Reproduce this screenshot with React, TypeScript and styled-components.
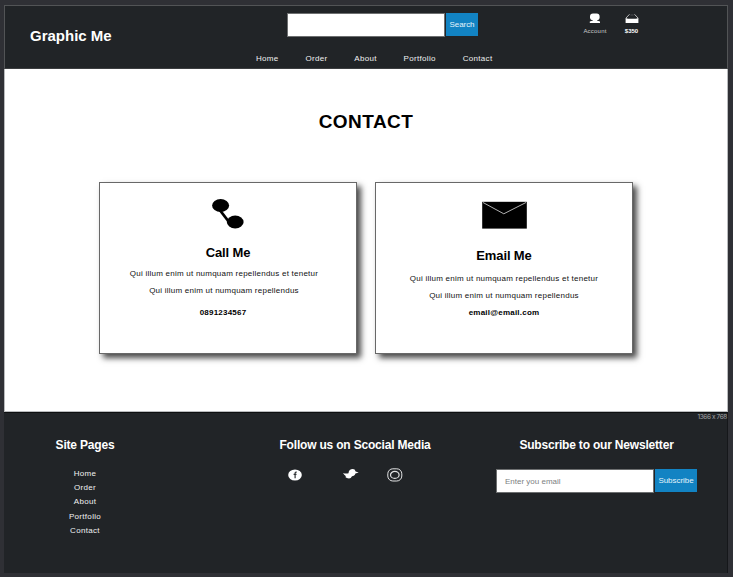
import React from "react";
import styled, { createGlobalStyle } from "styled-components";

const GlobalStyle = createGlobalStyle`
  * { box-sizing: border-box; }
  body {
    margin: 0;
    background: #2f3035;
    font-family: "Liberation Sans", Arial, sans-serif;
  }
  h1, h2, h3, p, ul { margin: 0; padding: 0; }
`;

const Canvas = styled.div`
  width: 733px;
  height: 577px;
  padding: 5px 5px 4px 4px;
  overflow: hidden;
`;

const Header = styled.header`
  display: flex;
  height: 64px;
  border: 1px solid #525456;
  border-bottom-color: #3c3e40;
  background: #212427;
  color: #fff;
`;

const Logo = styled.h1`
  width: 251px;
  padding: 20px 0 0 25px;
  font-size: 15px;
  line-height: 20px;
  white-space: nowrap;
`;

const HeaderCenter = styled.div`
  width: 326px;
  padding-top: 7px;
`;

const Form = styled.form<{ $indent?: number }>`
  display: flex;
  gap: 1px;
  margin-left: ${(p) => p.$indent ?? 0}px;
`;

const Field = styled.input`
  width: 158px;
  height: 24px;
  padding: 0 8px;
  border: 1px solid #6d6f70;
  border-radius: 0;
  outline: 0;
  background: #fff;
  font-family: inherit;
  font-size: 8px;
  letter-spacing: 0;
  &::placeholder { color: #7d7f82; opacity: 1; }
`;

const Button = styled.button<{ $width: number }>`
  width: ${(p) => p.$width}px;
  height: 23px;
  padding: 0;
  border: 0;
  background: #1283c3;
  color: #e4f3fb;
  font-family: inherit;
  font-size: 8px;
  line-height: 24px;
  letter-spacing: -0.05px;
  white-space: nowrap;
`;

const Nav = styled.nav`
  display: flex;
  gap: 26.8px;
  margin-top: 15px;
`;

const NavLink = styled.a`
  color: #f0f1f1;
  font-size: 8px;
  line-height: 14px;
  letter-spacing: 0.32px;
`;

const Shortcut = styled.div<{ $width: number; $bold?: boolean }>`
  display: flex;
  flex-direction: column;
  align-items: center;
  width: ${(p) => p.$width}px;
  padding-top: 7px;
  color: ${(p) => (p.$bold ? "#fff" : "#c9cbcc")};
  font-size: 6px;
  font-weight: ${(p) => (p.$bold ? 700 : 400)};
  line-height: 8px;
  letter-spacing: ${(p) => (p.$bold ? 0 : 0.22)}px;
  svg { display: block; margin-bottom: 3px; }
`;

const Main = styled.main`
  height: 343px;
  padding-top: 41px;
  border: solid #b9bbbd;
  border-width: 0 1px 1px;
  background: #fff;
  color: #000;
`;

const PageTitle = styled.h2`
  font-size: 19px;
  line-height: 24px;
  letter-spacing: 0.45px;
  text-align: center;
`;

const Cards = styled.div`
  display: flex;
  gap: 18px;
  margin: 48px 0 0 94px;
`;

const Card = styled.section`
  display: flex;
  flex-direction: column;
  align-items: center;
  width: 258px;
  height: 172px;
  border: 1px solid #686868;
  background: #fff;
  box-shadow: 4px 4px 6px rgba(0, 0, 0, 0.72);
`;

const CardIcon = styled.div<{ $height: number }>`
  display: flex;
  justify-content: center;
  align-items: center;
  width: 100%;
  height: ${(p) => p.$height}px;
`;

const CardTitle = styled.h3`
  font-size: 13px;
  line-height: 18px;
  letter-spacing: -0.13px;
  white-space: nowrap;
`;

const CardText = styled.p<{ $top: number; $inset?: number }>`
  padding: ${(p) => p.$top}px ${(p) => p.$inset ?? 0}px 0 0;
  color: #111;
  font-size: 8px;
  line-height: 17px;
  letter-spacing: 0.235px;
  text-align: center;
  white-space: nowrap;
`;

const CardValue = styled.strong<{ $top: number; $inset?: number }>`
  padding: ${(p) => p.$top}px ${(p) => p.$inset ?? 0}px 0 0;
  font-size: 8px;
  line-height: 12px;
  letter-spacing: 0.22px;
`;

const Footer = styled.footer`
  display: flex;
  height: 161px;
  border-top: 1px solid #0d0f10;
  border-right: 1px solid #15171a;
  background: #212427;
  color: #fff;
`;

const FooterColumn = styled.section<{ $width: number; $after?: number }>`
  flex: none;
  width: ${(p) => p.$width}px;
  margin-right: ${(p) => p.$after ?? 0}px;
  padding-top: 24px;
`;

const FooterTitle = styled.h3`
  font-size: 12px;
  line-height: 16px;
  letter-spacing: -0.19px;
  text-align: center;
  white-space: nowrap;
`;

const LinkList = styled.ul`
  display: flex;
  flex-direction: column;
  align-items: center;
  margin-top: 14px;
  list-style: none;
`;

const LinkItem = styled.li`
  height: 14.2px;
  line-height: 14px;
  font-size: 0;
`;

const Newsletter = styled.div`
  margin-top: 16px;
`;

const SocialRow = styled.div`
  display: flex;
  align-items: center;
  height: 14px;
  margin: 15px 0 0 74px;
  svg { display: block; }
  svg:nth-child(2) { margin: -3px 28px 0 41px; }
`;

const SizeTag = styled.span`
  width: 31px;
  color: #a4a6a8;
  font-family: Inter, sans-serif;
  font-size: 6.5px;
  line-height: 8px;
  letter-spacing: -0.4px;
  text-align: right;
  white-space: nowrap;
`;

const pages = ["Home", "Order", "About", "Portfolio", "Contact"];

const UserIcon = () => (
  <svg width="12" height="11" viewBox="0 0 12 11" fill="#fff">
    <rect x="1" y=".4" width="9.600" height="6.800" rx="3" />
    <path d="M4 6.500h4v1l3 1v1.500H.8V8.500L4 7.500z" />
  </svg>
);

const BasketIcon = () => (
  <svg width="14" height="11" viewBox="0 0 14 11">
    <path d="M1 5L4.500 1.300M13 5L9.500 1.300" stroke="#c8caca" strokeWidth=".9" />
    <path d="M5.500 2h3" stroke="#55585a" strokeWidth=".8" />
    <path d="M.6 4.900L3 5.800h8l2.400-.9v5.200H.6z" fill="#fff" />
  </svg>
);

const PhoneIcon = () => (
  <svg width="34" height="32" viewBox="0 0 34 32">
    <path d="M8 11L18 24" stroke="#000" strokeWidth="2.800" />
    <ellipse cx="9.600" cy="7.500" rx="8.500" ry="6.500" />
    <ellipse cx="24.200" cy="24" rx="8.400" ry="6.500" />
  </svg>
);

const MailIcon = () => (
  <svg width="45" height="28" viewBox="0 0 45 28">
    <rect x=".2" y=".8" width="44.600" height="26.800" />
    <path d="M1 1.500L21.800 12.800L44 1.500" fill="none" stroke="#c4c4c4" strokeWidth=".9" />
  </svg>
);

const FacebookIcon = () => (
  <svg width="14" height="12" viewBox="0 0 14 12">
    <ellipse cx="7" cy="6" rx="6.800" ry="5.600" fill="#fff" />
    <path d="M8.700 3.100H8q-.9 0-.9 1V9.300M5.600 5.400h2.900" fill="none" stroke="#303335" strokeWidth="1.200" />
  </svg>
);

const TwitterIcon = () => (
  <svg width="16" height="12" viewBox="0 0 16 12">
    <path
      d="M0 5Q3 6 5.500 5.200C5.500 2.500 7.500 1 9.800 1Q12 1 12.600 3.400L15.700 4.600L12.400 5.600C12 7.500 10.500 8 9 8.200Q8 10.500 6 10.500Q3.500 10.300 2.300 9L3 8.300Q1 7 0 5Z"
      fill="#fff"
    />
  </svg>
);

const InstagramIcon = () => (
  <svg width="16" height="14" viewBox="0 0 16 14" fill="none" stroke="#e2e3e4">
    <rect x=".8" y=".8" width="14" height="12.200" rx="5" strokeWidth="1" />
    <ellipse cx="7.800" cy="6.900" rx="4.300" ry="3.500" strokeWidth="1.200" />
  </svg>
);

export default function App() {
  return (
    <Canvas>
      <GlobalStyle />
      <Header>
        <Logo>Graphic Me</Logo>
        <HeaderCenter>
          <Form $indent={31}>
            <Field aria-label="Search" />
            <Button type="button" $width={32}>Search</Button>
          </Form>
          <Nav>
            {pages.map((page) => <NavLink key={page}>{page}</NavLink>)}
          </Nav>
        </HeaderCenter>
        <Shortcut $width={26}><UserIcon />Account</Shortcut>
        <Shortcut $width={47} $bold><BasketIcon />$350</Shortcut>
      </Header>
      <Main>
        <PageTitle>CONTACT</PageTitle>
        <Cards>
          <Card>
            <CardIcon $height={61}><PhoneIcon /></CardIcon>
            <CardTitle>Call Me</CardTitle>
            <CardText $top={3} $inset={8}>
              Qui illum enim ut numquam repellendus et tenetur<br />
              Qui illum enim ut numquam repellendus
            </CardText>
            <CardValue $top={8} $inset={10}>0891234567</CardValue>
          </Card>
          <Card>
            <CardIcon $height={64}><MailIcon /></CardIcon>
            <CardTitle>Email Me</CardTitle>
            <CardText $top={5}>
              Qui illum enim ut numquam repellendus et tenetur<br />
              Qui illum enim ut numquam repellendus
            </CardText>
            <CardValue $top={3}>email@email.com</CardValue>
          </Card>
        </Cards>
      </Main>
      <Footer>
        <FooterColumn $width={162} $after={48}>
          <FooterTitle>Site Pages</FooterTitle>
          <LinkList>
            {pages.map((page) => (
              <LinkItem key={page}><NavLink>{page}</NavLink></LinkItem>
            ))}
          </LinkList>
        </FooterColumn>
        <FooterColumn $width={282}>
          <FooterTitle>Follow us on Scocial Media</FooterTitle>
          <SocialRow><FacebookIcon /><TwitterIcon /><InstagramIcon /></SocialRow>
        </FooterColumn>
        <FooterColumn $width={201}>
          <FooterTitle>Subscribe to our Newsletter</FooterTitle>
          <Newsletter>
            <Form>
              <Field placeholder="Enter you email" />
              <Button type="button" $width={42}>Subscribe</Button>
            </Form>
          </Newsletter>
        </FooterColumn>
        <SizeTag>1366 x 768</SizeTag>
      </Footer>
    </Canvas>
  );
}
